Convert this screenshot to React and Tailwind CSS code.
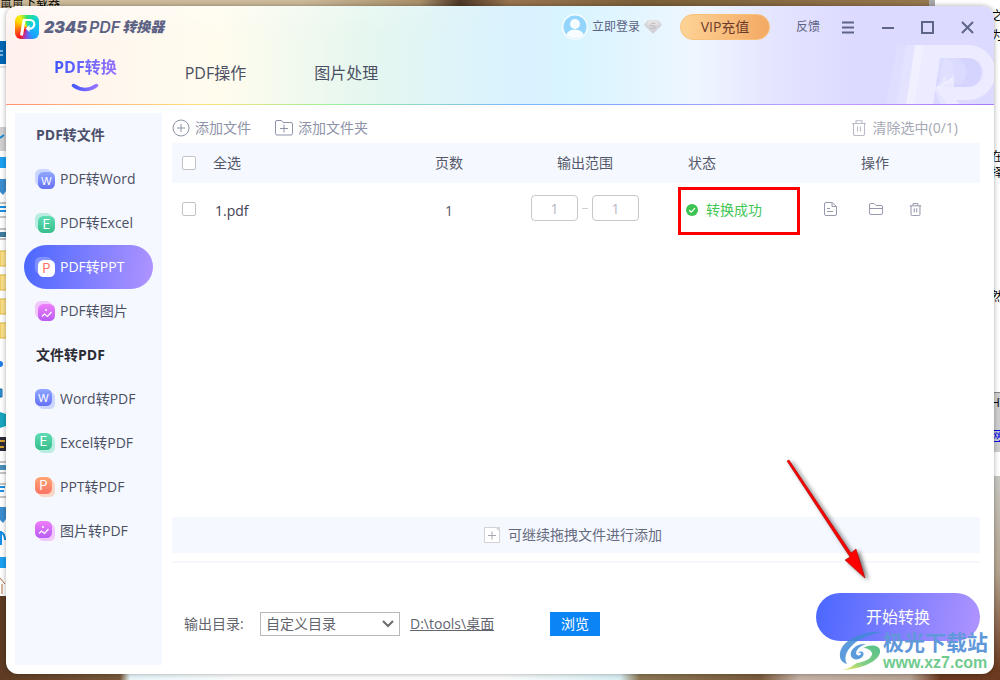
import React, { useState } from "react"

const toFile = [
  { id: "pdf-word", label: "PDF转Word", kind: "word" },
  { id: "pdf-excel", label: "PDF转Excel", kind: "excel" },
  { id: "pdf-ppt", label: "PDF转PPT", kind: "ppt" },
  { id: "pdf-img", label: "PDF转图片", kind: "image" }
]

const toPdf = [
  { id: "word-pdf", label: "Word转PDF", kind: "word" },
  { id: "excel-pdf", label: "Excel转PDF", kind: "excel" },
  { id: "ppt-pdf", label: "PPT转PDF", kind: "ppt" },
  { id: "img-pdf", label: "图片转PDF", kind: "image" }
]

const kinds = {
  word: { letter: "W", from: "#8fa6ff", to: "#6672f5" },
  excel: { letter: "E", from: "#5fdcb4", to: "#37bd8b" },
  ppt: { letter: "P", from: "#ffa573", to: "#fb7465" },
  image: { letter: null, from: "#ee7ff8", to: "#b95cf5" }
}

export default function App() {
  const [active, setActive] = useState("pdf-ppt")

  return (
    <div className="relative isolate flex min-h-screen flex-col overflow-hidden p-[6px] font-['Open_Sans','Noto_Sans_CJK_SC',sans-serif] text-sm text-[#4b4f63]">
      <Desktop />

      <div className="flex flex-1 flex-col overflow-hidden rounded-xl bg-white shadow-[0_0_5px_rgba(0,0,0,0.35)]">
        <Header />

        <div className="flex flex-1">
          {/* Sidebar */}
          <aside className="mt-2 mb-[9px] ml-[9px] w-[147px] shrink-0 bg-[#f5f8ff] px-[9px]">
            <h2 className="flex h-11 items-center pl-3 font-bold text-[#4b4f6b]">PDF转文件</h2>
            {toFile.map((item) => (
              <SideItem key={item.id} item={item} active={active === item.id} onSelect={setActive} />
            ))}
            <h2 className="flex h-11 items-center pl-3 font-bold text-[#2b2b33]">文件转PDF</h2>
            {toPdf.map((item) => (
              <SideItem key={item.id} item={item} active={active === item.id} onSelect={setActive} flip />
            ))}
          </aside>

          <main className="mr-[14px] ml-[10px] flex flex-1 flex-col">
            <Toolbar />
            <FileTable />
            <div className="flex-1" />
            <button className="flex h-9 items-center justify-center gap-2 bg-[#f5f8ff] pr-[6px] text-[#666b80]">
              <svg width="16" height="16" viewBox="0 0 16 16" fill="none">
                <path d="M.5.5H12l3.5 3.5v11.5H.5z" fill="#fff" stroke="#d2d2d6" />
                <path d="M11.500 0H16v4.500z" fill="#d6d6da" />
                <path d="M8 4.500v8M4 8.500h8" stroke="#a5a5ad" />
              </svg>
              可继续拖拽文件进行添加
            </button>
            <div className="mt-2 h-0.5 bg-[#f5f8ff]" />
            <Footer />
          </main>
        </div>
      </div>

      <Pointer />
      <SiteMark />
    </div>
  )
}

function Header() {
  return (
    <header className="relative h-[99px] bg-[linear-gradient(90deg,#fff1ee_0%,#fff8ee_12%,#fffcee_22%,#e6f7ef_36%,#d8f2ff_52%,#d9f5ff_58%,#eff6ff_70%,#e4e4ff_78%,#dcdaff_86%,#dcdaff_100%)]">
      <div className="absolute inset-0 bg-[linear-gradient(180deg,rgba(255,255,255,0.5),transparent_40%)] [mask-image:linear-gradient(90deg,#000,transparent_55%)]" />
      <svg className="absolute right-0 bottom-0" width="108" height="60" viewBox="0 0 108 60" fill="#fff">
        <path d="M12 0h26L28 60H0z" opacity=".12" />
        <path d="M20 0h18L28 60H10z" opacity=".15" />
        <path d="M54 13h30a14 14.500 0 0 1 0 29H50z" fill="#cfd0ff" opacity=".55" />
        <path d="M58 13h12a14 14.500 0 0 1 3 27L52 38z" opacity=".14" />
        <path d="M54 13h6a12 14 0 0 1 4 24L51 34z" opacity=".14" />
        <path d="M29 0H82a27.500 27.500 0 0 1 0 55H70l4 5H62L50 43 68 31v11h14a14 14.500 0 0 0 0-29H54L47 60H20z" opacity=".45" />
        <path d="M48 43 60 31v7l-8 6 10 16H55z" opacity=".3" />
      </svg>
      <div className="absolute inset-x-0 bottom-0 h-px bg-[linear-gradient(90deg,#ff9276_0%,#ffe27d_20%,#9cf09a_33%,#7db8ff_52%,#8aa4ff_65%,#c39cff_84%,#a678f5_100%)]" />

      {/* Title bar */}
      <div className="relative flex h-[42px] items-center pl-[9px] text-[#5c6284]">
        <svg width="24" height="24" viewBox="0 0 24 24" fill="none">
          <foreignObject width="24" height="24">
            <div className="size-6 rounded-md bg-[conic-gradient(from_0deg,#2fe07a,#12d4d2_50deg,#16bdf5_100deg,#1e9bff_150deg,#8a4be0_185deg,#ff1420_215deg,#ff7a10_260deg,#ffd400_300deg,#f5ee10_325deg,#2fe07a)]" />
          </foreignObject>
          <path d="M6.500 20.500 9 5" stroke="#fff" strokeWidth="3" />
          <path d="M8 5H15a4.300 4.300 0 0 1 0 8.600H14" stroke="#fff" strokeWidth="2.200" />
          <path d="M10.500 13.500 14.500 10v7z" fill="#fff" />
        </svg>
        <h1 className="ml-[5px] flex items-center gap-[2px] font-['Inter','Noto_Sans_CJK_SC',sans-serif] leading-5 italic">
          <span className="text-base font-black">2345</span>
          <span className="text-base font-semibold">PDF</span>
          <span className="text-sm font-black">转换器</span>
        </h1>

        <div className="ml-auto flex items-center text-xs">
          <button className="flex items-center gap-1">
            <svg width="26" height="26" viewBox="0 0 26 26">
              <defs>
                <clipPath id="face">
                  <circle cx="13" cy="13" r="11.500" />
                </clipPath>
              </defs>
              <circle cx="13" cy="13" r="13" fill="#f4fcff" />
              <circle cx="13" cy="13" r="11.500" fill="#93d5fc" />
              <g clipPath="url(#face)" fill="#f7fcff">
                <circle cx="13" cy="10" r="5" />
                <ellipse cx="13" cy="23" rx="9.500" ry="7.500" />
              </g>
            </svg>
            立即登录
          </button>
          <svg className="ml-1" width="18" height="14" viewBox="0 0 18 14">
            <path d="M4 0h10l4 5-9 9L0 5z" fill="#d4d4d8" />
            <path d="M4 0h10l1 5H3z" fill="#e3e1e2" />
            <path d="M11.500 3.500H8C6 3.500 6 6 8 6h2c2 0 2 2.500 0 2.500H6.500" fill="none" stroke="#c3bfc2" />
          </svg>
          <button className="ml-[18px] h-[26px] w-[90px] rounded-full border border-[#f8c07a] bg-linear-to-r from-[#fdd396] to-[#f3a963] text-sm text-[#6c3a2c]">
            VIP充值
          </button>
          <a href="#feedback" className="ml-[26px]">反馈</a>
          <WindowButton label="菜单" className="ml-[22px]">
            <path d="M0 1.500h12M0 6.500h12M0 11.500h12" />
          </WindowButton>
          <WindowButton label="最小化" className="ml-[27px]">
            <path d="M0 7h12" />
          </WindowButton>
          <WindowButton label="最大化" className="ml-[26px]">
            <path d="M1 1h11v11H1z" />
          </WindowButton>
          <WindowButton label="关闭" className="mr-[20px] ml-[27px]">
            <path d="M1 1l11 11M12 1 1 12" />
          </WindowButton>
        </div>
      </div>

      {/* Main tabs */}
      <nav className="relative flex items-start gap-17 pl-12 text-base leading-6">
        <button className="flex flex-col items-center gap-1 pt-[7px] font-bold">
          <span className="bg-linear-to-r from-[#3f57ff] to-[#9470ff] bg-clip-text text-transparent">PDF转换</span>
          <svg width="28" height="9" viewBox="0 0 28 9" fill="none">
            <defs>
              <linearGradient id="smile">
                <stop stopColor="#4459ff" />
                <stop offset="1" stopColor="#9874ff" />
              </linearGradient>
            </defs>
            <path d="M2.500 2.500q11.500 8 23 0" stroke="url(#smile)" strokeWidth="3.500" strokeLinecap="round" />
          </svg>
        </button>
        <button className="pt-[13px]">PDF操作</button>
        <button className="pt-[13px]">图片处理</button>
      </nav>
    </header>
  )
}

function WindowButton({ label, className, children }) {
  return (
    <button aria-label={label} className={className}>
      <svg width="13" height="13" viewBox="0 0 13 13" fill="none" stroke="#5f6585" strokeWidth="2">
        {children}
      </svg>
    </button>
  )
}

function SideItem({ item, active, onSelect, flip }) {
  return (
    <button
      onClick={() => onSelect(item.id)}
      className={`flex h-11 w-full items-center gap-[5px] rounded-full pl-[11px] ${
        active ? "bg-[linear-gradient(100deg,#4a67ff,#b094ff)] text-white" : ""
      }`}
    >
      <KindIcon kind={item.kind} active={active} flip={flip} id={item.id} />
      {item.label}
    </button>
  )
}

// Two stacked tiles: the solid one sits in front, flip moves it to the top left
function KindIcon({ kind, active, flip, id }) {
  const { letter, from, to } = kinds[kind]
  const front = flip ? 0 : 3
  const back = flip ? 3 : 0
  const ink = active ? to : "#fff"

  return (
    <svg width="20" height="20" viewBox="0 0 20 20" fill="none" aria-hidden="true">
      <defs>
        <linearGradient id={id} x2="0" y2="1">
          <stop stopColor={from} />
          <stop offset="1" stopColor={to} />
        </linearGradient>
      </defs>
      <rect x={back} y={back} width="17" height="17" rx="5.500" fill={active ? "#fff" : from} opacity={active ? 0.25 : 0.4} />
      <rect x={front} y={front} width="17" height="17" rx="5.500" fill={active ? "#fff" : `url(#${id})`} />
      {letter ? (
        <text x={front + 8.5} y={front + 13} textAnchor="middle" fontSize={letter === "W" ? 11 : 13} fontFamily="Inter, sans-serif" fill={ink}>
          {letter}
        </text>
      ) : (
        <g transform={`translate(${front} ${front})`}>
          <path d="M4 12.500 6.500 10l3 2.500 4-4.500" stroke={ink} strokeWidth="1.200" />
          <circle cx="8" cy="6" r="1" fill={ink} />
        </g>
      )}
    </svg>
  )
}

function TrashIcon({ color, size }) {
  return (
    <svg width={size} height={size} viewBox="0 0 16 16" fill="none" stroke={color} strokeWidth="1.100">
      <path d="M1 3.500h14M5 3V.800h6V3M2.500 3.500v10.500q0 1.500 1.500 1.500h8q1.500 0 1.500-1.500V3.500M6.500 6.500v5M9.500 6.500v5" />
    </svg>
  )
}

function Toolbar() {
  return (
    <div className="flex h-[38px] items-center pt-2 text-[#8e93a8]">
      <button className="flex items-center gap-[5px]">
        <svg width="18" height="18" viewBox="0 0 18 18" fill="none" stroke="currentColor">
          <circle cx="9" cy="9" r="8" />
          <path d="M9 5v8M5 9h8" />
        </svg>
        添加文件
      </button>
      <button className="ml-6 flex items-center gap-[5px]">
        <svg width="18" height="16" viewBox="0 0 18 16" fill="none" stroke="currentColor">
          <path d="M.500 2q0-1.500 1.500-1.500h4.500l1.500 2H16q1.500 0 1.500 1.500v9.500q0 1.500-1.500 1.500H2q-1.500 0-1.500-1.500zM9 4.500v8M5 8.500h8" />
        </svg>
        添加文件夹
      </button>
      <button className="mr-[22px] ml-auto flex items-center gap-[6px] text-[#a6a8b3]">
        <TrashIcon size="16" color="#b9bbc8" />
        清除选中(0/1)
      </button>
    </div>
  )
}

const checkbox = "block size-[14px] appearance-none rounded-[2px] border border-[#c3c3c6] bg-white checked:bg-[#4a67ff]"
const pageInput = "h-[26px] w-[47px] rounded-[4px] border border-[#c8c8c8] bg-white text-center text-[#b8b8c0]"

function FileTable() {
  return (
    <table className="w-full table-fixed text-left text-[#55586a]">
      <colgroup>
        <col className="w-[41px]" />
        <col />
        <col className="w-[86px]" />
        <col className="w-[186px]" />
        <col className="w-[122px]" />
        <col className="w-[180px]" />
      </colgroup>
      <thead className="bg-[#f5f8ff]">
        <tr className="h-10 [&>th]:p-0 [&>th]:font-normal">
          <th><input id="all" type="checkbox" className={`ml-[10px] ${checkbox}`} /></th>
          <th><label htmlFor="all">全选</label></th>
          <th className="text-center">页数</th>
          <th className="text-center">输出范围</th>
          <th><span className="ml-[10px]">状态</span></th>
          <th className="text-center"><span className="mr-[30px]">操作</span></th>
        </tr>
      </thead>
      <tbody>
        <tr className="h-14 [&>td]:p-0">
          <td>
            <div className="pb-1 pl-[10px]">
              <input type="checkbox" aria-label="1.pdf" className={checkbox} />
            </div>
          </td>
          <td className="text-[#3f4252]"><span className="ml-[2px]">1.pdf</span></td>
          <td className="text-center">1</td>
          <td>
            <div className="flex items-center justify-center gap-1 pb-[6px]">
              <input aria-label="起始页" defaultValue="1" className={pageInput} />
              <span className="h-px w-[6px] bg-[#d0d0d4]" />
              <input aria-label="结束页" defaultValue="1" className={pageInput} />
            </div>
          </td>
          <td className="relative">
            <div className="absolute inset-x-0 inset-y-1 border-[3px] border-[#fe0000]" />
            <div className="flex items-center gap-2 pb-[2px] pl-2 text-[#42c655]">
              <svg width="12" height="12" viewBox="0 0 12 12" fill="none">
                <circle cx="6" cy="6" r="6" fill="#3cc351" />
                <path d="M3.200 6.200 5.300 8.200 9 4.200" stroke="#fff" strokeWidth="1.200" />
              </svg>
              转换成功
            </div>
          </td>
          <td>
            <div className="flex items-center pb-1 pl-6">
              <button aria-label="打开文件">
                <svg width="13" height="14" viewBox="0 0 13 14" fill="none" stroke="#9698ad">
                  <path d="M2 .500h6l4.500 4v7.500q0 1.500-1.500 1.500H2Q.500 13.500.500 12V2Q.500.500 2 .500zM8 .500v4h4.500M3 6.500h3M3 9.500h6" />
                </svg>
              </button>
              <button aria-label="打开文件夹" className="ml-8">
                <svg width="14" height="14" viewBox="0 0 14 14" fill="none" stroke="#9698ad">
                  <path d="M.500 3q0-1.500 1.500-1.500h3l2 2h5q1.500 0 1.500 1.500v6q0 1.500-1.500 1.500H2Q.500 12.500.500 11zM.500 6.500h13" />
                </svg>
              </button>
              <button aria-label="删除" className="ml-[26px]">
                <TrashIcon size="13" color="#85879c" />
              </button>
            </div>
          </td>
        </tr>
      </tbody>
    </table>
  )
}

function Footer() {
  return (
    <div className="flex h-[111px] items-start pt-[30px] pl-3 text-[#62646e]">
      <div className="mt-[19px] flex h-6 items-center">
        <label htmlFor="dir" className="w-[76px]">输出目录:</label>
        <div className="relative">
          <select id="dir" className="block h-6 w-[140px] appearance-none border border-[#b9b9b9] bg-white pl-[5px] text-sm leading-5">
            <option>自定义目录</option>
            <option>原文件目录</option>
          </select>
          <svg className="pointer-events-none absolute top-2 right-[6px]" width="12" height="8" viewBox="0 0 12 8" fill="none">
            <path d="M1 1l5 5 5-5" stroke="#6b6b6b" strokeWidth="2" />
          </svg>
        </div>
        <a href="#dir" className="ml-[10px] w-[140px] underline">D:\tools\桌面</a>
        <button className="h-6 w-[50px] bg-[#0b84f5] text-white">浏览</button>
      </div>
      <button className="ml-auto h-12 w-[164px] rounded-full bg-[linear-gradient(100deg,#4a67ff,#b094ff)] text-base text-white">
        开始转换
      </button>
    </div>
  )
}

// Red arrow drawn over the window, pointing at the start button
function Pointer() {
  return (
    <svg className="pointer-events-none absolute right-[125px] bottom-[99px] drop-shadow-[3px_2px_2px_rgba(0,0,0,0.55)]" width="90" height="130" viewBox="0 0 90 130">
      <path d="M2 10 4 9 66 102 71 98 80 127 60 109 65 106z" fill="#f00" stroke="#a00" strokeWidth=".6" />
    </svg>
  )
}

function SiteMark() {
  return (
    <div className="pointer-events-none absolute right-[12px] bottom-[8px] flex items-center">
      <svg width="44" height="40" viewBox="0 0 44 40" fill="none">
        <defs>
          <linearGradient id="wave" x1="1" y1="0" x2="0" y2="1">
            <stop stopColor="#3fb87c" />
            <stop offset=".6" stopColor="#76c978" />
            <stop offset="1" stopColor="#f3ec52" />
          </linearGradient>
        </defs>
        <path d="M43 1C27-1 3 8 1 22c-1 8 4 10 7 11C4 26 8 18 17 11 25 5 34 3 43 1z" fill="#3f8ad6" opacity=".85" />
        <path d="M27 13C18 12 10 19 12 25c2 5 9 4 12 0 2-4-2-6-5-3 6-1 2 4-1 2-3-3 2-9 9-11z" fill="#5b9bdc" />
        <path d="M24 17c9-5 18-2 17 4-1 9-18 17-37 18 7-2 9-4 14-7 9-1 16-6 15-10-1-3-5-5-9-5z" fill="url(#wave)" opacity=".9" />
      </svg>
      <div className="font-bold">
        <div className="text-[21px] leading-6 text-[#6198da]">极光下载站</div>
        <div className="font-['Liberation_Sans',sans-serif] text-base leading-[18px] text-[#6fcb8d]">www.xz7.com</div>
      </div>
    </div>
  )
}

// What peeks out around the window edges
function Desktop() {
  return (
    <div aria-hidden="true" className="absolute inset-0 -z-10 overflow-hidden bg-[linear-gradient(90deg,#5d3a21_0%,#78593b_12%,#e8f6fa_13%,#fcfcfc_25%,#fcfcfc_50%,#d9eff3_62%,#8b7653_64%,#7a5c3e_76%,#c5b2a6_80%,#b8a394_91%,#6b3a20_94%,#6b3a20_100%)] text-xs leading-4 text-black">
      <div className="absolute inset-x-0 top-0 h-6 bg-[linear-gradient(90deg,#cdbb9b_0%,#cdbb9b_30%,#a9906a_42%,#4f3828_46%,#997550_51%,#7c6039_65%,#96794f_93%)]" />
      <div className="absolute top-0 right-[65px] h-6 w-[6px] bg-[#a9a9a9]" />
      <div className="absolute top-0 right-0 h-6 w-[65px] bg-white" />

      <svg className="absolute top-2 left-0" width="20" height="588" viewBox="0 0 20 588">
        <path d="M0 0h20v588H0z" fill="#fff" />
        <path d="M0 33h20v23H0z" fill="#0067b5" />
        <path d="M0 43h3M0 47h3" stroke="#fff" />
        <path d="M0 59h20" stroke="#ccc" />
        <path d="M0 119h20v24H0z" fill="#d0d0d0" />
        <path d="M0 130 4 127" stroke="#1489d8" strokeWidth="2" />
        <path d="M0 149h20v11H0z" fill="#1ba1f2" />
        <path d="M0 171h6v12l-3 4-3-3z" fill="#3b8ed0" />
        <path d="M0 195h6M0 209h6M0 221h6M0 231h6" stroke="#888" />
        <path d="M0 199h6M0 203h6" stroke="#1b8fe0" strokeWidth="2" />
        <path d="M0 224h6v5H0z" fill="#3f7ca0" />
        <path d="M0 243h20v15H0zM0 267h20v15H0zM0 291h20v15H0zM0 315h20v15H0z" fill="#fbe08a" stroke="#e0b840" />
        <circle cx="0" cy="356" r="3" fill="#1b7ce5" />
        <path d="M0 381h2v8H0z" fill="#3ba5e8" stroke="#1f6ca8" />
        <path d="M0 404l6 2v12l-6 2z" fill="#18a6bf" />
        <path d="M0 429h6v14H0z" fill="#2c2c38" />
        <path d="M0 433h5M0 439h4" stroke="#d0a030" strokeWidth="2" />
        <path d="M0 454h6M0 465h6M0 476h6M0 489h6" stroke="#888" />
        <path d="M0 457h6v5H0z" fill="#4a8fb8" />
        <path d="M0 479h5M0 483h4" stroke="#1b8fe0" strokeWidth="2" />
        <path d="M0 499h6v12l-3 4-3-3z" fill="#3b8ed0" />
        <path d="M1 523v14M1 524q4 2 4 8" stroke="#138fe8" strokeWidth="2" fill="none" />
        <path d="M0 549h20v11H0z" fill="#1ba1f2" />
        <path d="M0 570 5 576M2 576v10" stroke="#b06a40" fill="none" />
      </svg>

      <div className="absolute top-0 right-0 h-[476px] w-5 overflow-hidden bg-white">
        <span className="absolute top-2 left-[11px]">之</span>
        <span className="absolute top-7 left-[11px]">为</span>
        <span className="absolute top-[149px] left-[11px]">在</span>
        <span className="absolute top-[165px] left-[11px]">择</span>
        <span className="absolute top-[289px] left-[11px]">然</span>
        <div className="absolute inset-x-0 top-[392px] h-[60px] border-t border-[#888] bg-[#cfcfcf]" />
        <span className="absolute top-[395px] left-[11px]">HT</span>
        <span className="absolute top-[428px] left-[11px] text-[#0000ee] underline">网</span>
      </div>
      <div className="absolute top-[476px] right-0 bottom-[10px] w-5 bg-linear-to-b from-[#c9c9c3] via-[#b5a48f] to-[#6b3a20]" />

      <span className="absolute -top-[5px] left-0">鼠鼠下载器</span>
    </div>
  )
}
